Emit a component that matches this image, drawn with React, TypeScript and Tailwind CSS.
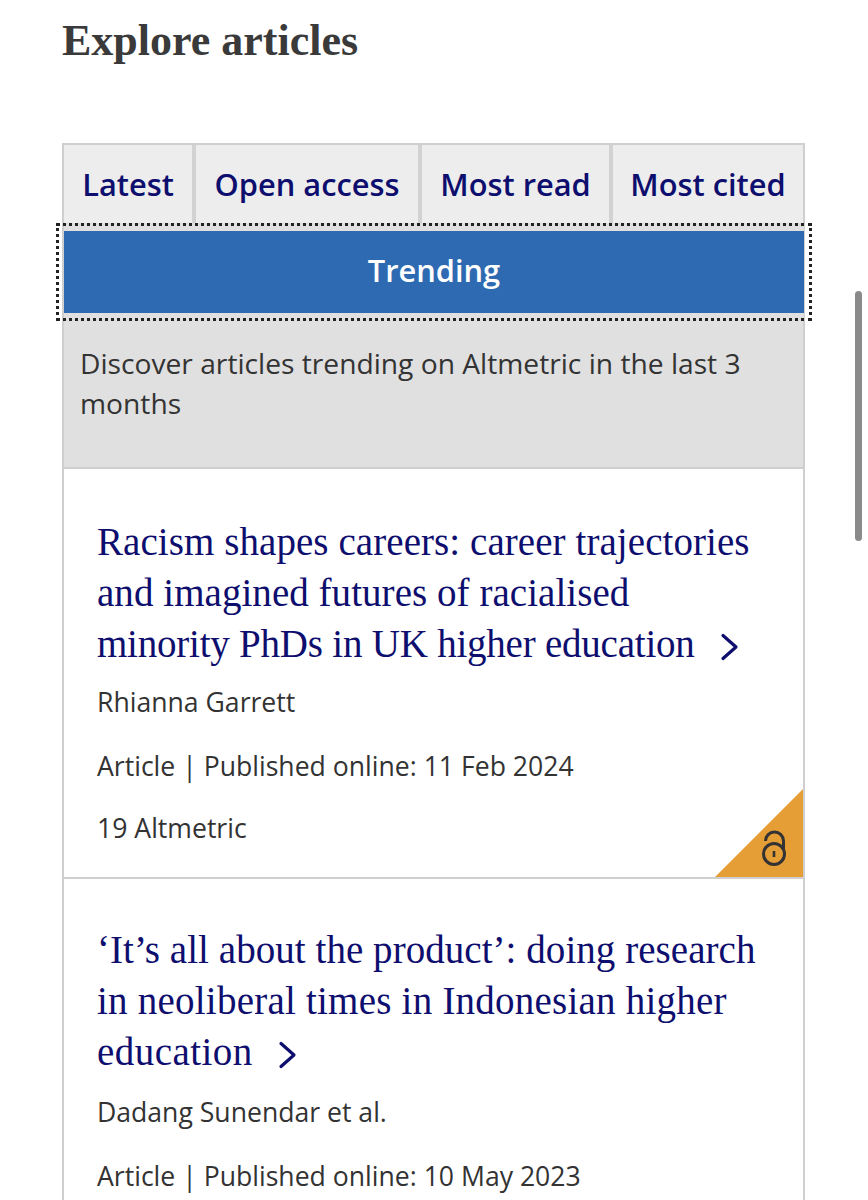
const serif = "font-['Liberation_Serif',serif]";

type Line = { text: string; track: string };

function Chevron() {
  return (
    <svg className="inline-block w-[20px] h-[28px] ml-[25px] align-[-4px] tracking-normal" viewBox="0 0 20 28" fill="none" stroke="#0e0e6e" strokeWidth={3.2} strokeLinecap="round" strokeLinejoin="round">
      <path d="M3 2.5 L16 14 L3 25.5" />
    </svg>
  );
}

function OpenAccess() {
  return (
    <div className="absolute right-0 bottom-0 w-[88px] h-[88px] bg-[#e59d36] [clip-path:polygon(100%_0,100%_100%,0_100%)]">
      <svg className="absolute left-[45px] bottom-[9px] w-[30px] h-[38px]" viewBox="0 0 30 38" fill="none" stroke="#333" strokeWidth={3}>
        <circle cx="14" cy="24" r="10.5" />
        <path d="M5.5 11 a9 9 0 0 1 18 0 V20" />
        <rect x="12.7" y="21" width="2.6" height="6" fill="#333" stroke="none" />
      </svg>
    </div>
  );
}

function Card({ lines, author, meta, altmetric, open, titleGap }: { lines: Line[]; author: string; meta: string; altmetric?: string; open?: boolean; titleGap: string }) {
  return (
    <div className="relative bg-white border-b-[2px] border-[#cfcfcf] pl-[33px] pr-[20px] h-[410px] last:border-b-0">
      <h3 className={`${serif} ${titleGap} text-[39px] leading-[51px] text-[#0e0e6e] whitespace-nowrap`}>
        {lines.map((l, i) => (
          <div key={i} className={l.track}>
            {l.text}
            {i === lines.length - 1 && <Chevron />}
          </div>
        ))}
      </h3>
      <p className="text-[26.6px] leading-[36px] text-[#333]">{author}</p>
      <p className="mt-[28px] text-[26.6px] leading-[36px] text-[#333]">{meta}</p>
      {altmetric && <p className="mt-[26px] text-[26.6px] leading-[36px] text-[#333]">{altmetric}</p>}
      {open && <OpenAccess />}
    </div>
  );
}

const tabs = [
  { label: "Latest", w: "w-[128px]" },
  { label: "Open access", w: "w-[222px]" },
  { label: "Most read", w: "w-[187px]" },
  { label: "Most cited", w: "flex-1" },
];

export default function App() {
  return (
    <div className="relative w-[868px] h-[1200px] overflow-hidden bg-white pl-[62px] font-['Open_Sans',sans-serif]">
      <h2 className={`${serif} h-[143px] pt-[15px] text-[44px] leading-[52px] font-bold text-[#3a3a3a]`}>Explore articles</h2>

      <div className="w-[743px] border-x-[2px] border-[#cfcfcf]">
        <div className="flex gap-[4px] h-[80px] bg-[#d2d2d2] border-t-[2px] border-[#cfcfcf]">
          {tabs.map((t) => (
            <div key={t.label} className={`${t.w} flex items-center justify-center bg-[#ededed] text-[30.8px] font-semibold text-[#0e0e6e] whitespace-nowrap`}>
              {t.label}
            </div>
          ))}
        </div>

        <div className="relative z-10 h-[98px] ml-[-8px] mr-[-9px] outline-dotted outline-[3px] outline-[#222] [outline-offset:-3px]">
          <div className="h-full ml-[8px] mr-[8px] py-[8px] bg-[#e0e0e0]">
            <div className="h-full bg-[#2e6ab1] flex items-center justify-center pb-[3px] text-[30.8px] font-semibold text-white">Trending</div>
          </div>
        </div>

        <div className="h-[148px] bg-[#e0e0e0] border-b-[2px] border-[#cfcfcf] px-[16px] pt-[22px] text-[28.2px] leading-[40px] text-[#333]">
          Discover articles trending on Altmetric in the last 3 months
        </div>

        <Card
          open
          titleGap="pt-[47px] pb-[15px]"
          lines={[
            { text: "Racism shapes careers: career trajectories", track: "tracking-[0.07px]" },
            { text: "and imagined futures of racialised", track: "tracking-[0.05px]" },
            { text: "minority PhDs in UK higher education", track: "tracking-[-0.22px]" },
          ]}
          author="Rhianna Garrett"
          meta="Article | Published online: 11 Feb 2024"
          altmetric="19 Altmetric"
        />
        <Card
          titleGap="pt-[45px] pb-[17px]"
          lines={[
            { text: "‘It’s all about the product’: doing research", track: "tracking-[0.05px]" },
            { text: "in neoliberal times in Indonesian higher", track: "tracking-[0.23px]" },
            { text: "education", track: "tracking-[0.45px]" },
          ]}
          author="Dadang Sunendar et al."
          meta="Article | Published online: 10 May 2023"
        />
      </div>

      <div className="absolute left-[855px] top-[291px] w-[7px] h-[250px] rounded-full bg-[#8a8a8a]" />
    </div>
  );
}
